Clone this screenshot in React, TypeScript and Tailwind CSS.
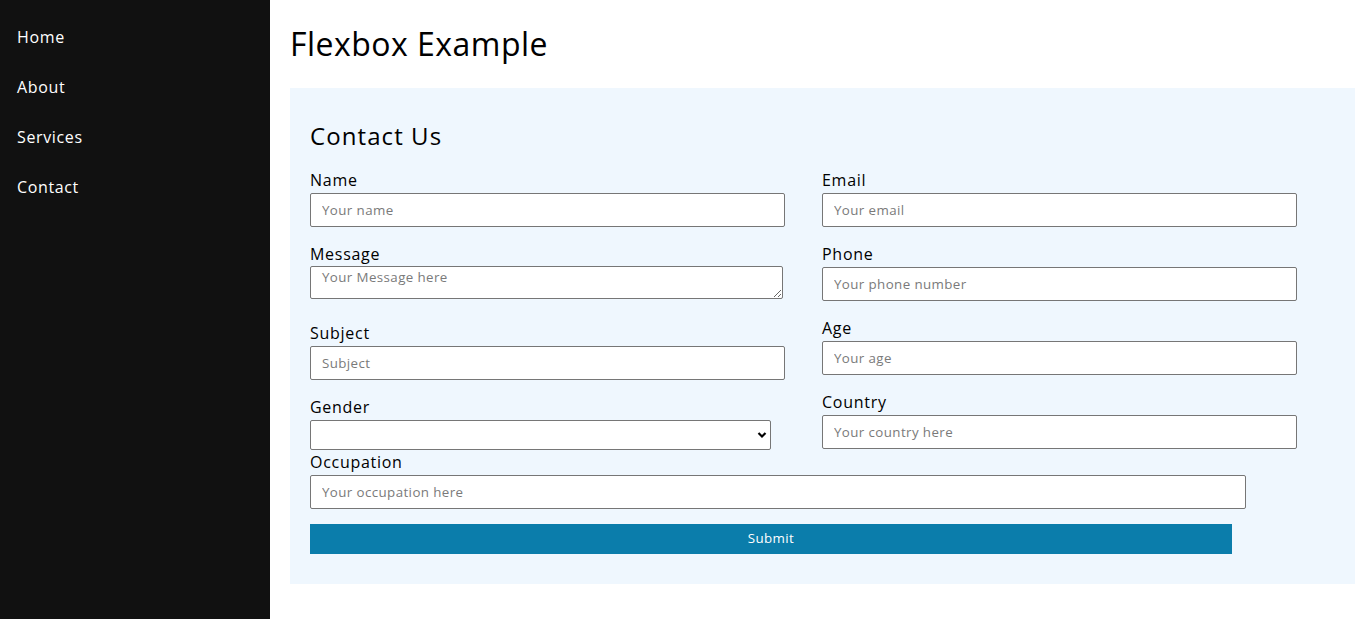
import React from "react";

const inputCls =
  "block h-[34px] w-[475px] rounded-[2px] border border-[#767676] bg-white px-[11px] text-[13.33px] tracking-[0.03em] text-black placeholder:text-[#7a7a7a] outline-none";

const Label = ({ children, cls = "" }: { children: React.ReactNode; cls?: string }) => (
  <label className={`block text-[16px] leading-6 tracking-[0.045em] text-black ${cls}`}>{children}</label>
);

const App = () => {
  const links = ["Home", "About", "Services", "Contact"];

  return (
    <div className="flex min-h-[619px] w-full bg-white font-['Open_Sans','Liberation_Sans',sans-serif]">
      <nav className="w-[270px] shrink-0 bg-[#111111] pl-[17px] pt-[25px]">
        <ul className="flex flex-col gap-[26px]">
          {links.map((l) => (
            <li key={l} className="text-[16px] leading-6 tracking-[0.04em] text-white">
              <a href="#">{l}</a>
            </li>
          ))}
        </ul>
      </nav>

      <main className="flex-1 pl-5 pr-2">
        <h1 className="mt-5 text-[32px] leading-[48px] tracking-[0.015em] text-black">Flexbox Example</h1>

        <div className="mt-5 bg-[#eff7fe] px-5 pb-[30px] pt-[30px]">
          <h2 className="text-[24px] leading-9 tracking-[0.045em] text-black">Contact Us</h2>

          <div className="mt-[14px] flex">
            {/* left column */}
            <div className="w-[512px] shrink-0">
              <Label>Name</Label>
              <input className={`${inputCls} mt-px`} placeholder="Your name" />

              <Label cls="mt-[15px]">Message</Label>
              <textarea
                className="block h-[33px] w-[473px] resize-y rounded-[2px] border border-[#767676] bg-white px-[11px] pt-[2px] text-[13.33px] leading-4 tracking-[0.03em] text-black placeholder:text-[#7a7a7a] outline-none"
                placeholder="Your Message here"
              />

              <Label cls="mt-[22px]">Subject</Label>
              <input className={`${inputCls} mt-px`} placeholder="Subject" />

              <Label cls="mt-[15px]">Gender</Label>
              <div className="relative mt-px w-[461px]">
                <select className="block h-[30px] w-[461px] appearance-none rounded-[2px] border border-[#767676] bg-white px-1 text-[13.33px] text-black outline-none">
                  <option value=""></option>
                  <option>Male</option>
                  <option>Female</option>
                </select>
                <svg
                  className="pointer-events-none absolute right-[4px] top-[11px]"
                  width="10"
                  height="8"
                  viewBox="0 0 10 8"
                >
                  <path d="M1.5 2 L5 5.5 L8.5 2" stroke="#000" strokeWidth="2.2" fill="none" />
                </svg>
              </div>
            </div>

            {/* right column */}
            <div className="flex-1">
              <Label>Email</Label>
              <input className={`${inputCls} mt-px`} placeholder="Your email" />

              <Label cls="mt-[15px]">Phone</Label>
              <input className={`${inputCls} mt-px`} placeholder="Your phone number" />

              <Label cls="mt-[15px]">Age</Label>
              <input className={`${inputCls} mt-px`} placeholder="Your age" />

              <Label cls="mt-[15px]">Country</Label>
              <input className={`${inputCls} mt-px`} placeholder="Your country here" />
            </div>
          </div>

          <Label>Occupation</Label>
          <input className={`${inputCls} mt-px w-[936px]`} placeholder="Your occupation here" />

          <button
            type="submit"
            className="mt-[15px] block h-[30px] w-[922px] bg-[#0b7dab] text-[13.33px] tracking-[0.03em] text-white"
          >
            Submit
          </button>
        </div>
      </main>
    </div>
  );
};

export default App;
